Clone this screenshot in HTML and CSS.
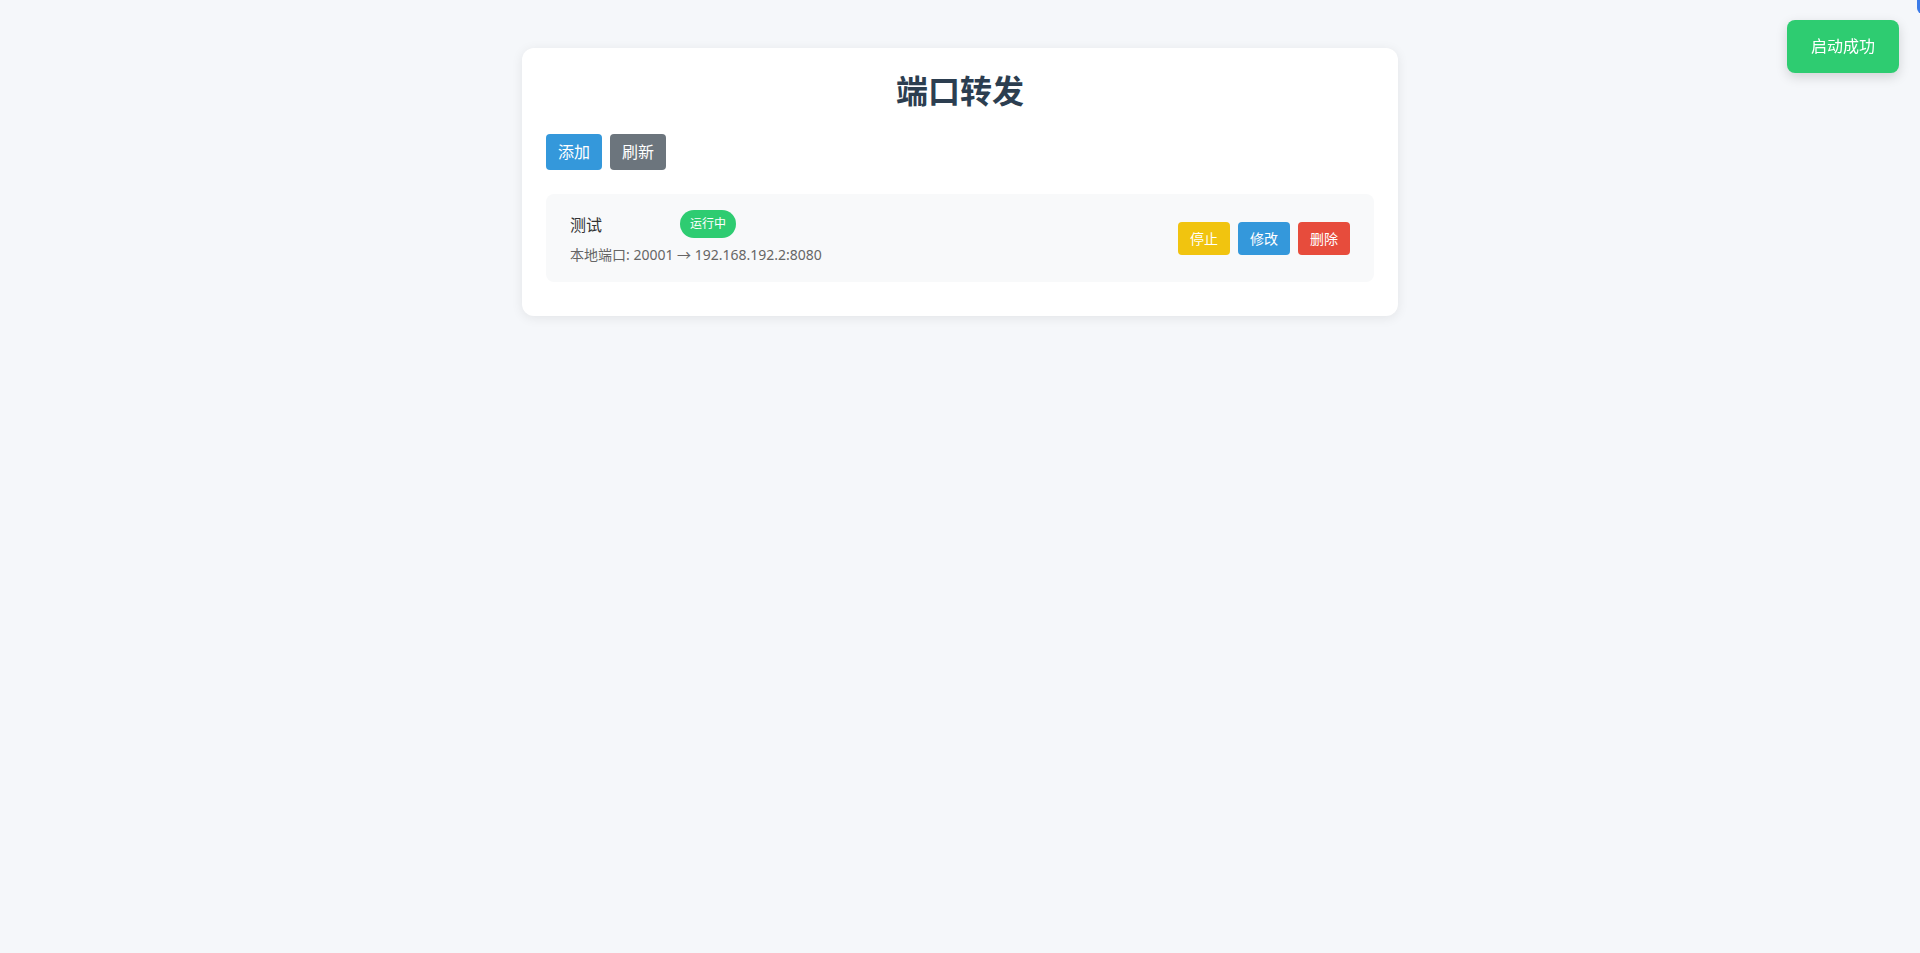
FILE: index.html
```html
<!DOCTYPE html>
<html lang="zh">
<head>
<meta charset="utf-8">
<title>端口转发</title>
<link rel="stylesheet" href="styles.css">
</head>
<body>
<div class="container">
  <h1 class="title">端口转发</h1>
  <div class="toolbar">
    <button class="btn btn-primary">添加</button>
    <button class="btn btn-secondary">刷新</button>
  </div>
  <div class="list">
    <div class="item">
      <div class="info">
        <div class="name-row">
          <span class="name">测试</span>
          <span class="badge">运行中</span>
        </div>
        <div class="detail">本地端口: 20001 → 192.168.192.2:8080</div>
      </div>
      <div class="actions">
        <button class="btn-sm btn-warning">停止</button>
        <button class="btn-sm btn-primary">修改</button>
        <button class="btn-sm btn-danger">删除</button>
      </div>
    </div>
  </div>
</div>
<div class="toast">启动成功</div>
<div class="toast-edge"></div>
</body>
</html>
```

FILE: styles.css
```css
html, body {
  margin: 0;
  padding: 0;
}
body {
  background: #f5f7fa;
  font-family: "Noto Sans", "Noto Sans CJK SC", sans-serif;
  color: #333;
  min-height: 953px;
}
.container {
  width: 876px;
  box-sizing: border-box;
  margin: 48px auto 0;
  background: #fff;
  border-radius: 12px;
  box-shadow: 0 2px 12px rgba(0, 0, 0, 0.08);
  padding: 24px 24px 24px;
}
.title {
  margin: 0 0 24px;
  text-align: center;
  font-size: 32px;
  line-height: 38px;
  font-weight: 700;
  color: #2c3e50;
}
.toolbar {
  display: flex;
  gap: 8px;
  margin-bottom: 24px;
}
.btn {
  font-family: inherit;
  font-size: 16px;
  line-height: 20px;
  padding: 8px 12px;
  border: none;
  border-radius: 4px;
  color: #fff;
  cursor: pointer;
}
.btn-primary { background: #3498db; }
.btn-secondary { background: #6c757d; }
.btn-warning { background: #f1c40f; }
.btn-danger { background: #e74c3c; }
.item {
  display: flex;
  align-items: center;
  justify-content: space-between;
  background: #f8f9fa;
  border-radius: 8px;
  padding: 16px 24px;
  margin-bottom: 10px;
}
.name-row {
  display: flex;
  align-items: center;
  height: 28px;
}
.name {
  width: 100px;
  margin-right: 10px;
  font-size: 16px;
  color: #333;
}
.badge {
  background: #2ecc71;
  color: #fff;
  font-size: 12px;
  line-height: 20px;
  padding: 4px 10px;
  border-radius: 14px;
}
.detail {
  margin-top: 6px;
  font-size: 14px;
  line-height: 22px;
  color: #666;
}
.actions {
  display: flex;
  gap: 8px;
}
.btn-sm {
  font-family: inherit;
  font-size: 14px;
  line-height: 21px;
  padding: 6px 12px;
  border: none;
  border-radius: 4px;
  color: #fff;
  cursor: pointer;
}
.toast {
  position: fixed;
  top: 20px;
  right: 21px;
  background: #2ecc71;
  color: #fff;
  font-size: 16px;
  line-height: 23px;
  padding: 15px 24px;
  border-radius: 8px;
  box-shadow: 0 4px 12px rgba(0, 0, 0, 0.15);
}
.toast-edge {
  position: fixed;
  top: -10px;
  right: -10px;
  width: 13px;
  height: 24px;
  background: #3b7be8;
  border-radius: 6px;
}
```
